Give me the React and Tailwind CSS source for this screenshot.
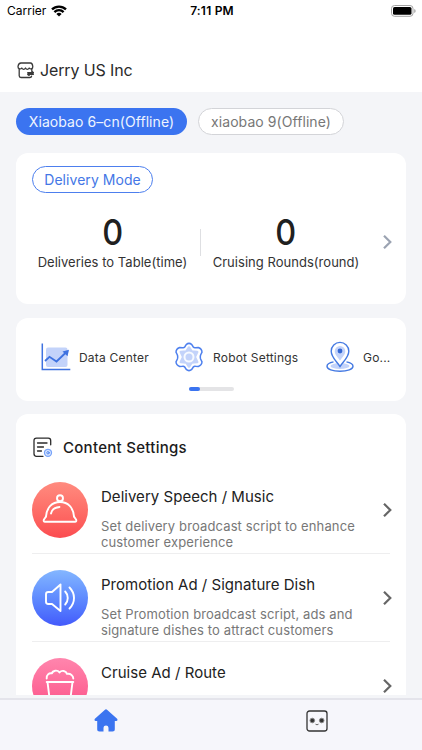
/**
 * Home screen of the robot manager app
 */
const CONTENT_ITEMS = [
  {
    title: 'Delivery Speech / Music',
    lines: ['Set delivery broadcast script to enhance', 'customer experience'],
    icon: <ClocheIcon />,
    circle: 'bg-linear-to-b from-[#ff8b7f] to-[#fb4b50]'
  },
  {
    title: 'Promotion Ad / Signature Dish',
    lines: ['Set Promotion broadcast script, ads and', 'signature dishes to attract customers'],
    icon: <SpeakerIcon />,
    circle: 'bg-linear-to-b from-[#84b6ff] to-[#4459fb]'
  },
  {
    title: 'Cruise Ad / Route',
    lines: [],
    icon: <PopcornIcon />,
    circle: 'bg-linear-to-b from-[#ff85ad] to-[#fb4b86]'
  }
];

function WifiIcon() {
  return (
    <svg width="16" height="12" viewBox="0 0 16 12" fill="none" stroke="#000" strokeWidth="2.3">
      <path d="M1 4.4a10 10 0 0 1 14 0" />
      <path d="M3.4 7.1a6.5 6.5 0 0 1 9.2 0" />
      <path d="M8 11.6 5.4 9a3.7 3.7 0 0 1 5.2 0Z" fill="#000" stroke="none" />
    </svg>
  );
}

function BatteryIcon() {
  return (
    <svg width="26" height="12" viewBox="0 0 26 12" fill="none">
      <rect x=".5" y=".5" width="21.5" height="10.8" rx="3" stroke="#a3a3a3" />
      <rect x="2" y="2" width="18.5" height="7.8" rx="1.6" fill="#000" />
      <path d="M23.4 4v4c1.500-.6 1.500-3.400 0-4Z" fill="#8c8c8c" />
    </svg>
  );
}

function StoreIcon() {
  return (
    <svg width="18" height="17" viewBox="0 0 18 17" fill="none" stroke="#3a3a3a" strokeWidth="1.3" strokeLinecap="round" strokeLinejoin="round">
      <path d="M4 1h9.500c1.400 0 2 .8 2.300 3.500.2 2.600-2.500 3.100-3.600 1.500-1 1.700-2.800 1.700-3.700 0-.9 1.700-2.700 1.700-3.700 0C3.800 7.600.8 7.100 1 4.500 1.400 1.800 2.100 1 4 1Z" />
      <path d="M2.200 7.200v6.500c0 1.200.6 1.800 1.800 1.800h8.800c1.200 0 1.700-.5 1.800-1.300M14.800 7v2" />
      <path d="M10.800 10.700h5.500L15 9.700M16.300 12.300h-5.500l1.300 1" strokeWidth="1.500" />
    </svg>
  );
}

function ChevronIcon({ className }) {
  return (
    <svg className={className} width="10" height="16" viewBox="0 0 10 16" fill="none" stroke="currentColor" strokeWidth="2.2">
      <path d="m2 1.700 6.300 6.300L2 14.300" />
    </svg>
  );
}

function DataCenterIcon() {
  return (
    <svg width="30" height="28" viewBox="0 0 30 28" fill="none" stroke="#3e72e0">
      <rect x="5" y="4.500" width="21.500" height="19.500" rx="2" fill="#c3d3fa" stroke="none" />
      <path d="M1.300.5v26h28" strokeWidth="1.500" />
      <path d="m4 18 4.500-4.200 7 4.700L26 8.500" strokeWidth="1.800" />
      <path d="m21.500 8.500 6.500-1.800-1.500 6.600Z" fill="#3e72e0" stroke="none" />
    </svg>
  );
}

function GearIcon() {
  return (
    <svg width="30" height="30" viewBox="0 0 30 30" fill="none" strokeLinejoin="round">
      <path
        d="M12.200 2.600Q15 .1 17.800 2.600L19.300 5Q20.100 6 21.500 5.700L24.300 5.500Q27.900 6.700 28 10.200L26.600 13Q26 15 26.600 17L28 19.800Q27.900 23.300 24.300 24.500L21.500 24.300Q20.100 24 19.300 25L17.800 27.400Q15 29.900 12.200 27.400L10.700 25Q9.900 24 8.500 24.300L5.700 24.500Q2.100 23.300 2 19.800L3.400 17Q4 15 3.400 13L2 10.200Q2.100 6.700 5.700 5.500L8.500 5.700Q9.900 6 10.700 5Z"
        stroke="#4e80ee"
        strokeWidth="1.500"
      />
      <path
        d="M15 5.500 17.800 9.600 23.200 10 20.800 15l2.400 5-5.400.4L15 24.500 12.200 20.400 6.800 20 9.200 15 6.800 10 12.200 9.600Z"
        fill="#c3d3fa"
        stroke="#c3d3fa"
        strokeWidth="2.500"
      />
      <circle cx="15" cy="15" r="4.500" fill="#c3d3fa" stroke="#f7faff" strokeWidth="2" />
    </svg>
  );
}

function PinIcon() {
  return (
    <svg width="28" height="32" viewBox="0 0 28 32" fill="none" stroke="#4479e2" strokeWidth="1.400">
      <ellipse cx="14" cy="25" rx="9.500" ry="3" fill="#c3d3fa" stroke="none" />
      <path d="M7.500 20.900C3.500 21.700 1 23.200 1 25.200c0 2.900 5.600 5 13 5s13-2.100 13-5c0-2-2.500-3.500-6.500-4.300" />
      <path d="M14 25.500C10.500 20.300 5.200 16 5.200 10.200a8.800 8.800 0 0 1 17.600 0C22.800 16 17.500 20.300 14 25.500Z" fill="#fff" />
      <path d="M14 19.500c-2-3.200-5.300-5.600-5.300-9.300a5.300 5.300 0 0 1 10.600 0c0 3.700-3.300 6.100-5.300 9.300Z" fill="#c3d3fa" stroke="none" />
      <circle cx="14" cy="10" r="2.400" fill="#3568d4" stroke="none" />
    </svg>
  );
}

function ContentIcon() {
  return (
    <svg width="20" height="21" viewBox="0 0 20 21" fill="none" stroke="#2b2b2b" strokeWidth="1.300" strokeLinecap="round">
      <path d="M10 19.300H3.500c-1.600 0-2.500-.8-2.500-2.500v-13C1 2 1.900 1.200 3.500 1.200h11.800c1.600 0 2.400.8 2.400 2.600v4" />
      <path d="M4.500 6h9.500M4.500 10h6M4.500 14h4" />
      <circle cx="15" cy="15.800" r="3.500" fill="#dce8ff" stroke="#78a4fa" strokeWidth="1.300" />
      <circle cx="15" cy="15.800" r="1.200" fill="#fff" stroke="#4b83f0" strokeWidth="1" />
    </svg>
  );
}

function ClocheIcon() {
  return (
    <svg width="56" height="56" viewBox="0 0 56 56" fill="none" stroke="#fff" strokeWidth="1.900" strokeLinecap="round" strokeLinejoin="round">
      <circle cx="28" cy="16.200" r="3" />
      <path d="M14 34.500c.7-9 6-14.500 14-14.500s13.300 5.500 14 14.500" />
      <path d="M14 34.500 11.800 37.700c-.4 1.200.1 2 1.200 2h30c1.100 0 1.600-.8 1.200-2L42 34.500" />
      <path d="M19 31.500c.6-3.500 3.600-6 8.500-6.500" />
    </svg>
  );
}

function SpeakerIcon() {
  return (
    <svg width="56" height="56" viewBox="0 0 56 56" fill="none" stroke="#fff" strokeWidth="1.900" strokeLinecap="round" strokeLinejoin="round">
      <path d="M28.500 14.500v26.500l-8.500-7h-3.700c-1.600 0-2.300-.7-2.300-2.200v-7.600c0-1.500.7-2.200 2.300-2.200H20l8.500-7.500Z" />
      <path d="M33.200 21.500c3.400 3.500 3.400 9.500 0 13M37.500 17.500c6 6 6 15 0 21" />
    </svg>
  );
}

function PopcornIcon() {
  return (
    <svg width="56" height="56" viewBox="0 0 56 56" fill="none" stroke="#fff" strokeWidth="1.900" strokeLinecap="round" strokeLinejoin="round">
      <path d="M14.700 20.500c-.5-3.500 2.300-5.800 5.300-5.100.7-3 5.300-3.800 7.500-1 2.300-2.500 6.500-1.700 7.500 1.500 3.700-.5 6.300 1.600 6.300 4.600" />
      <path d="M14.700 24h26.600M15.500 24l2.500 20h20l2.500-20" />
    </svg>
  );
}

function HomeIcon() {
  return (
    <svg width="24" height="23" viewBox="0 0 24 23" fill="#3b74f0">
      <path d="M10.700.9c.9-.8 1.700-.8 2.600 0l9.800 8.900c.8.8.4 2.200-.8 2.200h-1.500v8.300c0 1.500-.8 2.200-2.300 2.200h-4v-3.500c0-3.300-5-3.300-5 0v3.500h-4c-1.500 0-2.300-.7-2.300-2.200V12H1.700C.5 12 .1 10.600.9 9.800L10.700.9Z" />
    </svg>
  );
}

function RobotIcon() {
  return (
    <svg width="22" height="22" viewBox="0 0 22 22" fill="none" stroke="#333">
      <rect x="1" y="1" width="20" height="20" rx="2.500" strokeWidth="1.300" />
      <circle cx="6.300" cy="10.500" r="2.300" fill="#333" stroke="#888" />
      <circle cx="15.700" cy="10.500" r="2.300" fill="#333" stroke="#888" />
      <path d="M9.500 14.200q1.500 1.200 3 0" stroke="#666" />
    </svg>
  );
}

function StatusBar() {
  return (
    <div className="grid grid-cols-3 items-center h-[22px] pl-[7px] pr-[5px]">
      <div className="flex items-center gap-[5px] text-[12px]">
        Carrier <WifiIcon />
      </div>
      <div className="text-center text-[12px] font-semibold tracking-[0.2px]">7:11 PM</div>
      <div className="flex justify-end">
        <BatteryIcon />
      </div>
    </div>
  );
}

function Stat({ value, label, className }) {
  return (
    <div className={`flex flex-col items-center shrink-0 ${className}`}>
      <span className="text-[36px] leading-[44px] font-[450] scale-x-[0.9] text-[#202020]">{value}</span>
      <span className="text-[13px] leading-4 tracking-[0.03px] text-[#333] whitespace-nowrap">{label}</span>
    </div>
  );
}

function ContentRow({ item }) {
  return (
    <div className="flex h-[88px] shrink-0 border-b border-[#eeeeef]">
      <div className={`mt-[15.500px] size-14 shrink-0 rounded-full ${item.circle}`}>{item.icon}</div>
      <div className="ml-[13px] flex-1 whitespace-nowrap">
        <h3 className="mt-[21px] text-[15px] leading-5 tracking-[0.03px] text-[#222]">{item.title}</h3>
        <p className="mt-[11px] text-[13px] leading-4 tracking-[0.13px] text-[#777]">
          {item.lines.map((line) => (
            <span key={line} className="block">{line}</span>
          ))}
        </p>
      </div>
      <ChevronIcon className="mt-[36px] -mr-[2px] shrink-0 text-[#666]" />
    </div>
  );
}

export default function App() {
  return (
    <div className="flex flex-col w-[422px] h-[750px] overflow-hidden bg-[#f4f5f8] font-[Inter,sans-serif] text-black">
      <header className="h-[92px] shrink-0 bg-white">
        <StatusBar />
        <div className="mt-[37px] ml-[17px] flex items-center gap-[5px] h-[22px]">
          <StoreIcon />
          <span className="text-[16px] leading-5 -mt-px tracking-[-0.12px] text-[#2b2b2b]">Jerry US Inc</span>
        </div>
      </header>

      <main className="flex flex-col h-[603px] shrink-0 overflow-hidden px-4 pt-4">
        <div className="flex gap-[11px] h-[27px] shrink-0 text-[14px] tracking-[0.07px] whitespace-nowrap">
          <button className="w-[171px] rounded-full bg-[#3b74f0] text-[#eef4ff]">Xiaobao 6–cn(Offline)</button>
          <button className="w-[146px] rounded-full border border-[#d3d4d8] bg-white text-[#777]">xiaobao 9(Offline)</button>
        </div>

        <section className="mt-[18px] h-[151px] shrink-0 rounded-xl bg-white pt-[13px] px-4">
          <div className="flex items-center justify-center w-[121px] h-[27px] rounded-full border border-[#4d7fee] text-[14px] tracking-[0.05px] text-[#4477e6]">
            Delivery Mode
          </div>
          <div className="mt-[17px] flex">
            <Stat value="0" label="Deliveries to Table(time)" className="w-[161px]" />
            <div className="mt-[19px] ml-[7px] mr-[4px] h-[27px] w-px shrink-0 bg-[#dedfe2]" />
            <Stat value="0" label="Cruising Rounds(round)" className="w-[162px]" />
            <ChevronIcon className="mt-[24px] ml-auto -mr-[2px] shrink-0 text-[#9ba3b2]" />
          </div>
        </section>

        <section className="mt-[14px] h-[83px] shrink-0 rounded-xl bg-white">
          <div className="flex items-center h-8 mt-[23px] pl-[25px] text-[12px] tracking-[0.2px] text-[#333] whitespace-nowrap">
            <DataCenterIcon />
            <span className="ml-[8px] mt-px w-[95px]">Data Center</span>
            <GearIcon />
            <span className="ml-[9px] mt-px w-[113px]">Robot Settings</span>
            <PinIcon />
            <span className="ml-[9px] mt-px">Go...</span>
          </div>
          <div className="mt-[14px] mx-auto w-[45px] h-1 rounded-full bg-[#e4e4e6]">
            <div className="w-[11px] h-1 rounded-full bg-[#3b74f0]" />
          </div>
        </section>

        <section className="mt-[13px] flex flex-col flex-1 overflow-hidden rounded-t-xl bg-white px-4">
          <div className="flex items-center gap-[10px] h-[52px] shrink-0 pt-[15px] pl-[1px]">
            <ContentIcon />
            <h2 className="mt-[2px] text-[15px] font-medium tracking-[0.28px] text-[#1c1c1c]">Content Settings</h2>
          </div>
          {CONTENT_ITEMS.map((item) => (
            <ContentRow key={item.title} item={item} />
          ))}
        </section>
      </main>

      <nav className="mt-[3px] grid grid-cols-2 justify-items-center h-[52px] shrink-0 border-t-2 border-[#e4e4eb] bg-[#f6f6fb] pt-[9px]">
        <HomeIcon />
        <div className="pt-[1px]">
          <RobotIcon />
        </div>
      </nav>
    </div>
  );
}
